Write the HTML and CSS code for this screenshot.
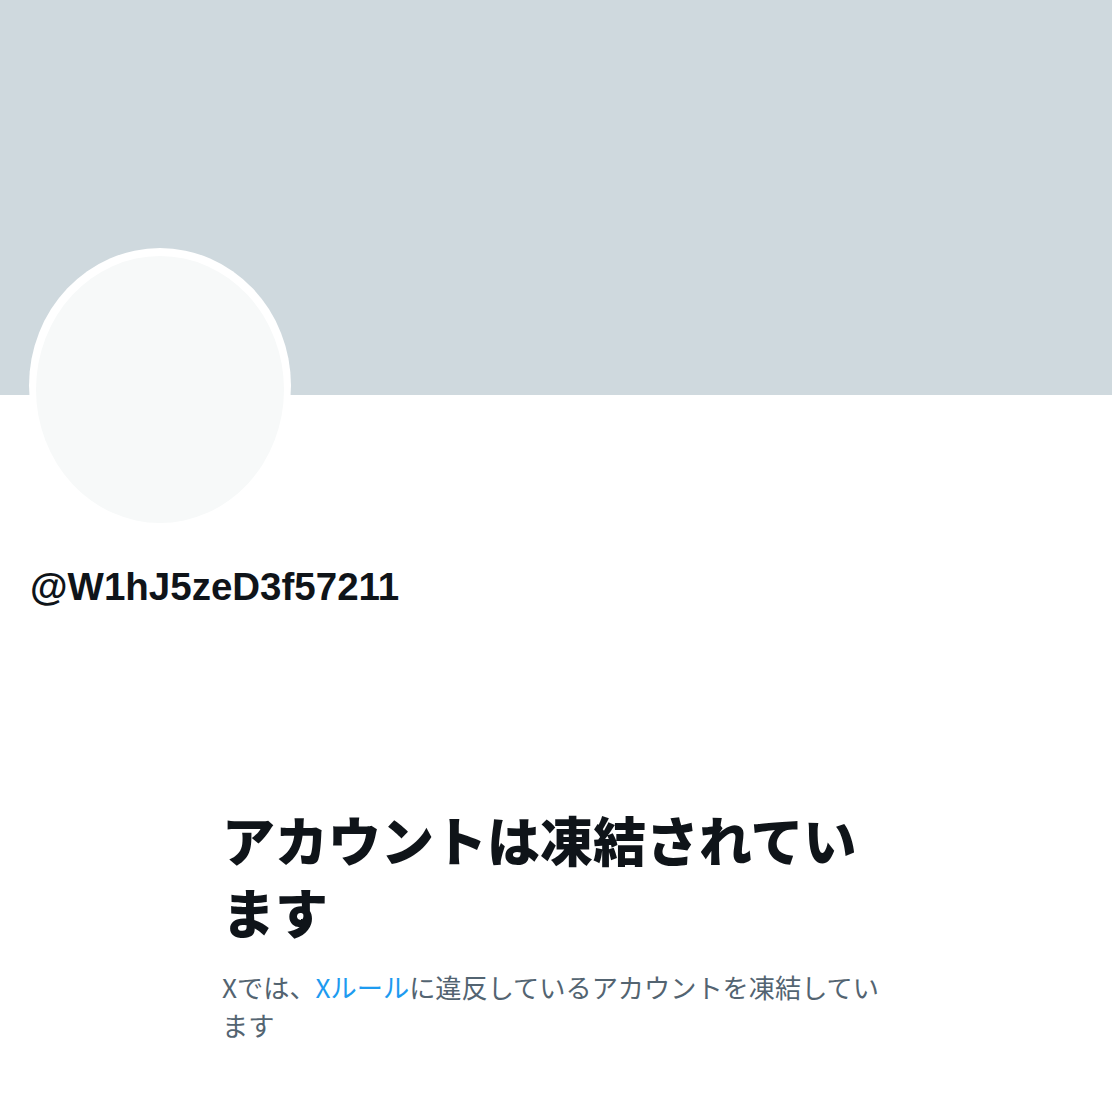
FILE: index.html
```html
<!DOCTYPE html>
<html lang="ja">
<head>
    <meta charset="UTF-8">
    <meta name="viewport" content="width=device-width, initial-scale=1.0">
    <title>@W1hJ5zeD3f57211 / X</title>
    <link rel="stylesheet" href="styles.css">
</head>
<body>
    <div class="banner"></div>
    <div class="profile">
        <div class="avatar"><div class="avatar-inner"></div></div>
        <div class="handle">@W1hJ5zeD3f57211</div>
    </div>
    <div class="notice">
        <h1>アカウントは凍結されています</h1>
        <p>Xでは、<a href="#">Xルール</a>に違反しているアカウントを凍結しています</p>
    </div>
</body>
</html>
```

FILE: styles.css
```css
body {
    margin: 0;
    background: #fff;
    font-family: "Liberation Sans", "Noto Sans CJK JP", sans-serif;
    color: #0f1419;
}
.banner {
    height: 395px;
    background-color: #cfd9de;
}
.profile {
    padding-left: 29px;
}
.avatar {
    width: 262px;
    height: 275px;
    margin-top: -147px;
    border-radius: 50%;
    background: #fff;
    padding: 8px 7px 0 7px;
    box-sizing: border-box;
}
.avatar-inner {
    width: 100%;
    height: 100%;
    border-radius: 50%;
    background: #f7f9f9;
}
.handle {
    margin-top: 40px;
    padding-left: 1px;
    font-size: 38.5px;
    line-height: 48px;
    font-weight: 700;
}
.notice {
    width: 668px;
    margin: 192px auto 0;
    font-family: "Noto Sans CJK JP", sans-serif;
}
.notice h1 {
    margin: 0;
    font-size: 53px;
    line-height: 72px;
    font-weight: 900;
}
.notice p {
    margin: 21px 0 0;
    font-size: 26.2px;
    line-height: 38px;
    color: #536471;
}
.notice a {
    color: #1d9bf0;
    text-decoration: none;
}
```
